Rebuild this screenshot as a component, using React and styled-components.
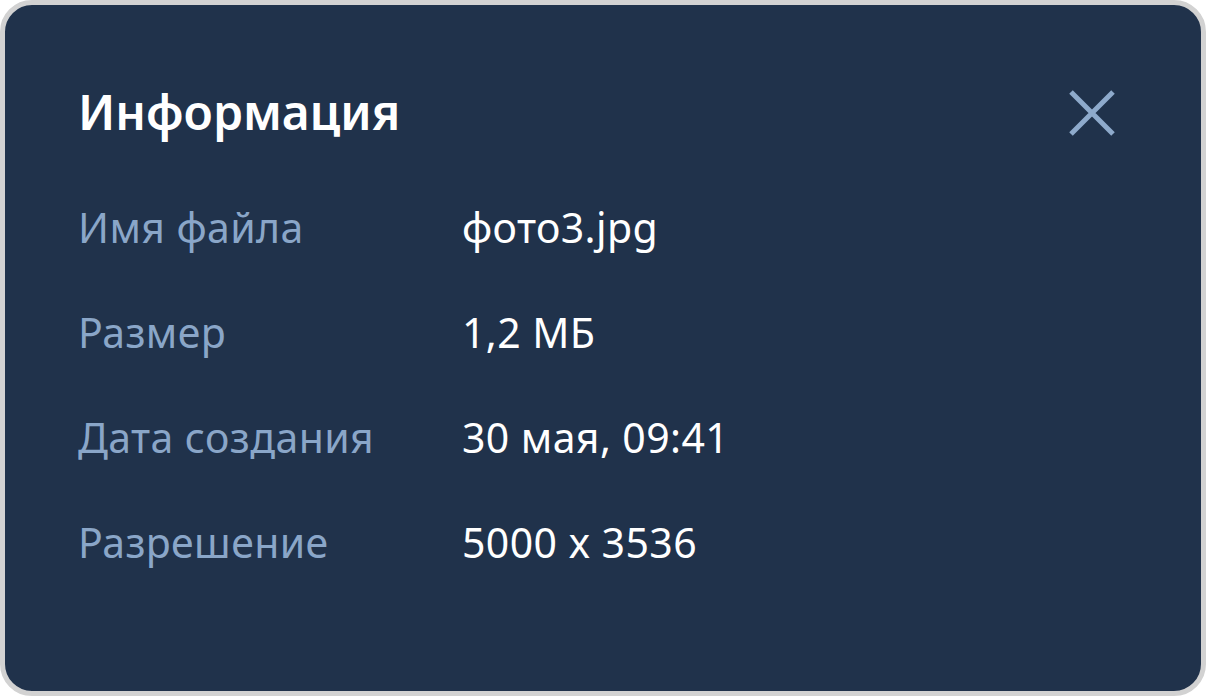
import React from 'react';
import styled, { createGlobalStyle } from 'styled-components';

const GlobalStyle = createGlobalStyle`
  html, body {
    margin: 0;
    padding: 0;
    background: #ffffff;
  }
  body {
    font-family: "Noto Sans", "Open Sans", sans-serif;
  }
`;

const rows = [
  { label: 'Имя файла', value: 'фото3.jpg' },
  { label: 'Размер', value: '1,2 МБ' },
  { label: 'Дата создания', value: '30 мая, 09:41' },
  { label: 'Разрешение', value: '5000 x 3536' },
];

const App = () => (
  <>
    <GlobalStyle />
    <Panel>
      <Header>
        <Title>Информация</Title>
        <CloseButton aria-label="Закрыть">
          <svg width="50" height="50" viewBox="0 0 50 50">
            <path d="M4 4 L46 46 M46 4 L4 46" stroke="#8eaacb" strokeWidth="5" />
          </svg>
        </CloseButton>
      </Header>
      <InfoList>
        {rows.map((row) => (
          <InfoRow key={row.label}>
            <Label>{row.label}</Label>
            <Value>{row.value}</Value>
          </InfoRow>
        ))}
      </InfoList>
    </Panel>
  </>
);

const Panel = styled.div`
  box-sizing: border-box;
  width: 1206px;
  height: 696px;
  background: #20324b;
  border: 5px solid #d2d2d2;
  border-radius: 32px;
  padding: 75px 84px 0 73px;
`;

const Header = styled.div`
  display: flex;
  align-items: flex-start;
  justify-content: space-between;
  height: 64px;
`;

const Title = styled.h1`
  margin: 0;
  font-size: 48px;
  font-weight: 600;
  color: #ffffff;
  line-height: 64px;
`;

const CloseButton = styled.button`
  display: flex;
  margin-top: 8px;
  padding: 0;
  border: none;
  background: none;
  cursor: pointer;
`;

const InfoList = styled.div`
  display: flex;
  flex-direction: column;
  margin-top: 53px;
  gap: 45px;
`;

const InfoRow = styled.div`
  display: grid;
  grid-template-columns: 384px 1fr;
  align-items: center;
  height: 60px;
  font-size: 41px;
  line-height: 60px;
  letter-spacing: 0.4px;
`;

const Label = styled.span`
  color: #8aa6c8;
`;

const Value = styled.span`
  color: #ffffff;
`;

export default App;
